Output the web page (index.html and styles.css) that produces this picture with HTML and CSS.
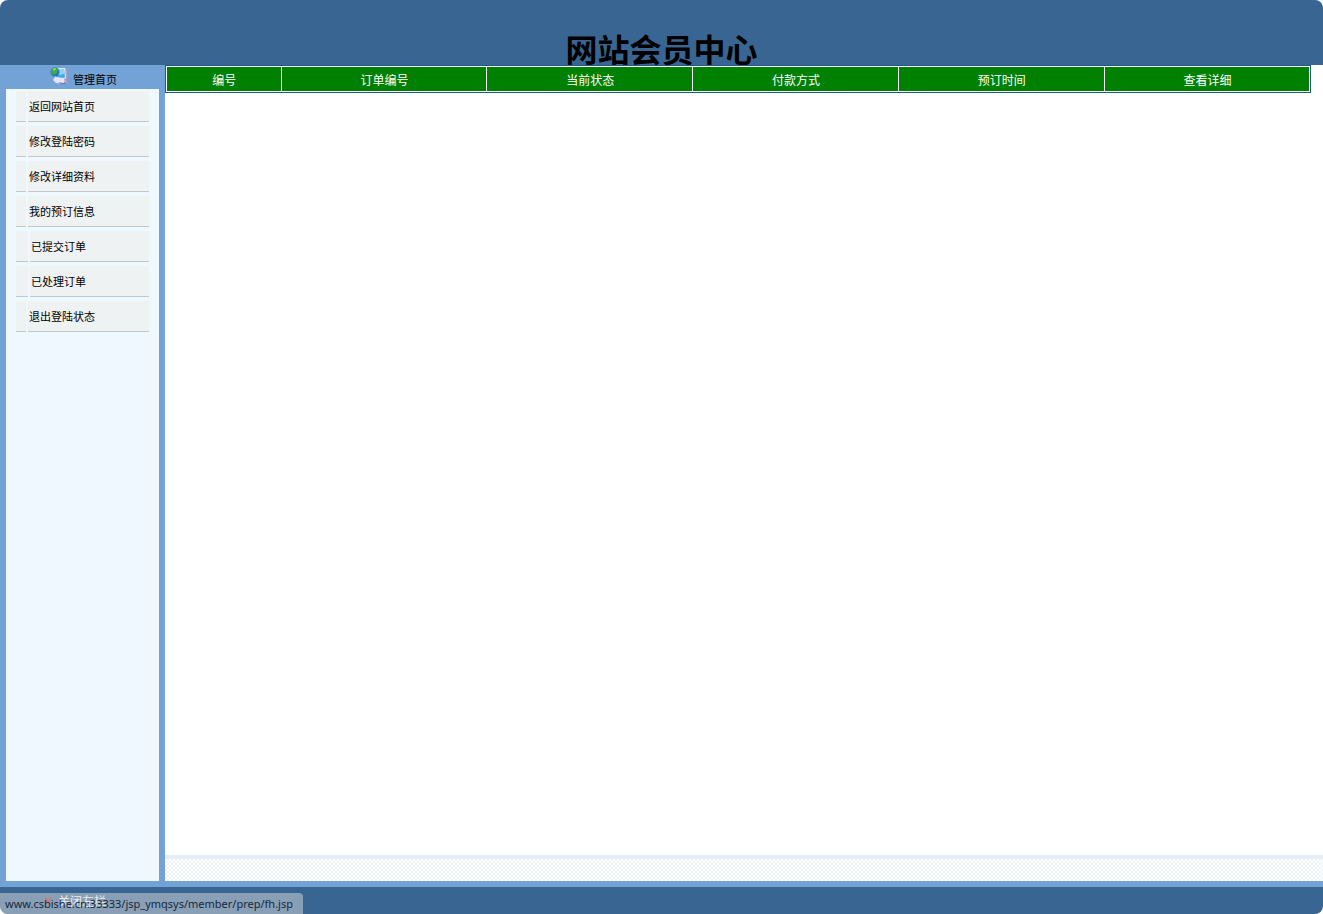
FILE: index.html
```html
<!DOCTYPE html>
<html lang="zh-CN">
<head>
    <meta charset="UTF-8">
    <meta name="viewport" content="width=device-width, initial-scale=1.0">
    <title>网站会员中心</title>
    <link rel="stylesheet" href="styles.css">
</head>
<body>
    <div class="page">
        <header class="header">
            <h1>网站会员中心</h1>
        </header>

        <div class="main">
            <aside class="sidebar">
                <div class="sidebar-title">
                    <svg class="computer-icon" viewBox="0 0 18 18" aria-hidden="true">
                        <path d="M4 11l-1 2 3 3 8 1 3-2-1-4z" fill="#e6e3f2"/>
                        <path d="M8 15l5 1 4-2-2 3-4 0z" fill="#7b75a5"/>
                        <path d="M15 1l2 1v12l-2 2-1-4z" fill="#a9a0cb"/>
                        <path d="M4 1l11 0 1 10-2 1-9-1z" fill="#dceafa"/>
                        <path d="M5 2l9 0 1 8-1 1-8-1z" fill="#45a9e6"/>
                        <path d="M8 2l6 0 0 5-6 1z" fill="#8ed4fa"/>
                        <circle cx="5" cy="5" r="4.5" fill="#2478bd"/>
                        <path d="M1 4c1-3 3-4 6-3l1 3-2 3-3 1-2-2z" fill="#3bab46"/>
                        <path d="M3 2l2-1 1 1-2 2z" fill="#a4e07e"/>
                    </svg>
                    <a href="#">管理首页</a>
                </div>
                <nav class="sidebar-body">
                    <ul class="menu">
                        <li><a href="#">返回网站首页</a></li>
                        <li><a href="#">修改登陆密码</a></li>
                        <li><a href="#">修改详细资料</a></li>
                        <li><a href="#">我的预订信息</a></li>
                        <li class="sub"><a href="#">已提交订单</a></li>
                        <li class="sub"><a href="#">已处理订单</a></li>
                        <li><a href="#">退出登陆状态</a></li>
                    </ul>
                </nav>
            </aside>

            <main class="content">
                <table class="orders">
                    <thead>
                        <tr>
                            <th class="col-id">编号</th>
                            <th>订单编号</th>
                            <th>当前状态</th>
                            <th>付款方式</th>
                            <th>预订时间</th>
                            <th>查看详细</th>
                        </tr>
                    </thead>
                </table>
                <div class="content-bottom"></div>
            </main>
        </div>

        <footer class="footer">
            <button type="button" class="toggle">
                <svg class="close-icon" viewBox="0 0 8 8" aria-hidden="true">
                    <path d="M1 1l6 6M7 1L1 7" stroke="#e00000" stroke-width="1.5"/>
                </svg>
                <span>关闭左栏</span>
            </button>
        </footer>
        <div class="status">www.csbishe.cn:33333/jsp_ymqsys/member/prep/fh.jsp</div>
    </div>

    <script>
        // Show or hide the left column
        const toggle = document.querySelector('.toggle');
        toggle.addEventListener('click', function() {
            const hidden = document.querySelector('.sidebar').classList.toggle('hidden');
            toggle.querySelector('span').textContent = hidden ? '打开左栏' : '关闭左栏';
        });
    </script>
</body>
</html>
```
FILE: styles.css
```css
* {
    margin: 0;
    padding: 0;
    box-sizing: border-box;
}

body {
    background-color: #fff;
    color: #000;
    font-family: "Noto Sans CJK SC", sans-serif;
    font-size: 12px;
}

a {
    color: #000;
    text-decoration: none;
}

.page {
    position: relative;
    display: flex;
    flex-direction: column;
    min-height: 100vh;
    border-radius: 8px;
    overflow: hidden;
}

.header {
    height: 65px;
    padding-top: 28px;
    background-color: #396592;
    text-align: center;
    overflow: hidden;
}

.header h1 {
    font-size: 32px;
    line-height: 40px;
}

.main {
    flex: 1;
    display: flex;
    border-bottom: 6px solid #73a2d6;
}

/* left column */
.sidebar {
    display: flex;
    flex-direction: column;
    width: 165px;
    padding: 0 6px;
    background-color: #73a2d6;
}

.sidebar.hidden {
    display: none;
}

.sidebar-title {
    display: flex;
    justify-content: center;
    gap: 5px;
    height: 24px;
    padding: 2px 0 0 2px;
    font-size: 11px;
    line-height: 24px;
}

.computer-icon {
    width: 18px;
    height: 18px;
}

.sidebar-body {
    flex: 1;
    padding: 2px 10px;
    background-color: #eff7ff;
}

.menu {
    display: flex;
    flex-direction: column;
    gap: 4px;
    list-style: none;
}

.menu li {
    display: flex;
    gap: 2px;
    font-size: 11px;
    line-height: 30px;
}

.menu li::before {
    content: "";
    width: 10px;
    background-color: #eef2f2;
    border-bottom: 1px solid #c3c7ca;
}

.menu li.sub::before {
    width: 12px;
}

.menu a {
    flex: 1;
    padding-left: 1px;
    background-color: #eef2f2;
    border-bottom: 1px solid #c3c7ca;
}

.menu a:hover {
    color: #f00;
}

/* right column */
.content {
    flex: 1;
    display: flex;
    flex-direction: column;
    justify-content: space-between;
}

.orders {
    width: 99%;
    border: 1px solid #225888;
    border-collapse: separate;
    border-spacing: 1px;
    background-color: #fff;
    table-layout: fixed;
}

.orders th {
    width: 18%;
    height: 24px;
    padding: 2px 0 0 1px;
    background-color: #008000;
    color: #fff;
    font-size: 12px;
    font-weight: normal;
    line-height: 22px;
}

.orders .col-id {
    width: 10%;
}

.content-bottom {
    height: 26px;
    border-top: 4px solid #e5eef7;
    background: repeating-conic-gradient(#eef3f7 0 25%, #fff 0 50%) 0 0 / 4px 4px;
}

.footer {
    height: 27px;
    padding: 4px 0 0 44px;
    background-color: #396592;
}

.toggle {
    display: flex;
    align-items: center;
    gap: 6px;
    border: none;
    background: none;
    color: #fff;
    font-family: inherit;
    font-size: 12px;
    line-height: 20px;
    cursor: pointer;
}

.close-icon {
    width: 8px;
    height: 8px;
}

/* link address shown over the footer */
.status {
    position: absolute;
    left: 0;
    bottom: 0;
    padding: 0 10px 0 5px;
    border-top-right-radius: 4px;
    background-color: rgba(218, 218, 218, 0.5);
    color: #14283f;
    font-family: "Noto Sans", sans-serif;
    font-size: 11px;
    line-height: 21px;
}
```
